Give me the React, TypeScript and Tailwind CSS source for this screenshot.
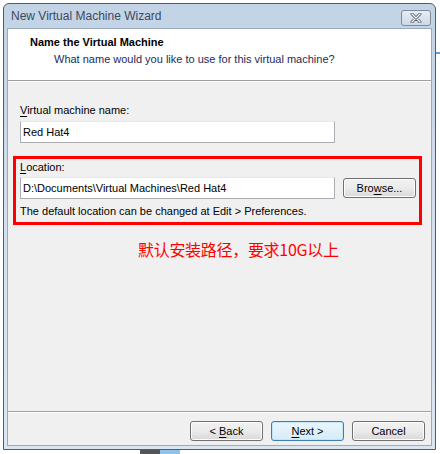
import React from "react";

const font = { fontFamily: '"Liberation Sans", Arial, sans-serif' };

const WinButton = ({
  children,
  focused = false,
}: {
  children: React.ReactNode;
  focused?: boolean;
}) => (
  <button
    className={
      focused
        ? "w-[73px] h-[20px] rounded-[3px] border border-[#3c7fb1] bg-gradient-to-b from-[#eaf6fd] to-[#d7ebf6] text-[11px] leading-none text-black shadow-[inset_0_0_0_1px_#c4e5f6]"
        : "w-[73px] h-[20px] rounded-[3px] border border-[#707070] bg-gradient-to-b from-[#f2f2f2] via-[#ebebeb] to-[#d8d8d8] text-[11px] leading-none text-black shadow-[inset_0_0_0_1px_#fcfcfc]"
    }
  >
    {children}
  </button>
);

const TextBox = ({ value }: { value: string }) => (
  <div className="w-[315px] h-[22px] border border-[#abadb3] border-t-[#e3e9ef] bg-white pl-[2px] flex items-center text-[11px] text-black">
    {value}
  </div>
);

export default function App() {
  return (
    <div className="relative w-[440px] h-[454px] bg-white overflow-hidden" style={font}>
      {/* bits of desktop behind */}
      <div className="absolute left-[436px] top-[52px] w-[10px] h-[2px] bg-[#6aa0c8]" />
      <div className="absolute left-[140px] top-[450px] w-[20px] h-[6px] bg-[#555]" />
      <div className="absolute left-[160px] top-[450px] w-[20px] h-[6px] bg-[#8cc4ee]" />

      <div className="ml-[3px] mt-[3px] w-[433px] h-[447px] rounded-t-[6px] border border-[#555b63] bg-gradient-to-b from-[#c2d3e6] via-[#d3e0ee] to-[#dbe6f3] flex flex-col">
        {/* title bar */}
        <div className="h-[24px] flex items-center justify-between pl-[7px] pr-[4px]">
          <span className="text-[12px] text-[#3b4a5c]">New Virtual Machine Wizard</span>
          <div className="w-[30px] h-[16px] mt-[3px] rounded-[3px] border border-[#7f8b99] bg-gradient-to-b from-[#e6edf5] to-[#cdd9e6] flex items-center justify-center">
            <svg width="12" height="10" viewBox="0 0 12 10">
              <path d="M2 1 L10 9 M10 1 L2 9" stroke="#5a6470" strokeWidth="3" strokeLinecap="round" />
              <path d="M2 1 L10 9 M10 1 L2 9" stroke="#f5f7fa" strokeWidth="1.2" strokeLinecap="round" />
            </svg>
          </div>
        </div>

        {/* client area */}
        <div className="flex-1 mx-[3px] mb-[3px] border border-[#9aaabb] flex flex-col bg-[#f0f0f0]">
          <div className="h-[52px] bg-white border-b border-[#a0a0a0] pl-[22px] pt-[5px]">
            <div className="text-[11px] font-bold text-black leading-[16px]">Name the Virtual Machine</div>
            <div className="text-[11px] text-[#1e2a5a] leading-[16px] pl-[24px] mt-[1px]">
              What name would you like to use for this virtual machine?
            </div>
          </div>
          <div className="h-px bg-white" />

          <div className="flex-1 flex flex-col pl-[12px] pt-[20px]">
            <div className="text-[11px] leading-[16px] text-black">
              <span className="underline underline-offset-2">V</span>irtual machine name:
            </div>
            <div className="mt-[3px]">
              <TextBox value="Red Hat4" />
            </div>

            <div className="mt-[13px] -ml-[7px] w-[409px] h-[69px] border-[3px] border-[#ff0000] pl-[4px]">
              <div className="text-[11px] leading-[16px] text-black">
                <span className="underline underline-offset-2">L</span>ocation:
              </div>
              <div className="mt-[2px] flex items-center gap-[8px]">
                <TextBox value="D:\Documents\Virtual Machines\Red Hat4" />
                <WinButton>
                  Bro<span className="underline underline-offset-2">w</span>se...
                </WinButton>
              </div>
              <div className="mt-[4px] text-[11px] leading-[16px] text-black">
                The default location can be changed at Edit &gt; Preferences.
              </div>
            </div>

            <div
              className="mt-[14px] ml-[118px] text-[16px] leading-[20px] text-[#ff0000] tracking-[-0.3px]"
              style={{ fontFamily: '"Noto Sans CJK SC", "Noto Sans", sans-serif' }}
            >
              默认安装路径，要求10G以上
            </div>
          </div>

          <div className="h-px bg-[#a0a0a0]" />
          <div className="h-px bg-white" />
          <div className="h-[32px] flex items-start justify-end gap-[8px] pr-[6px] pt-[8px]">
            <WinButton>
              &lt; <span className="underline underline-offset-2">B</span>ack
            </WinButton>
            <WinButton focused>
              <span className="underline underline-offset-2">N</span>ext &gt;
            </WinButton>
            <WinButton>Cancel</WinButton>
          </div>
        </div>
      </div>
    </div>
  );
}
